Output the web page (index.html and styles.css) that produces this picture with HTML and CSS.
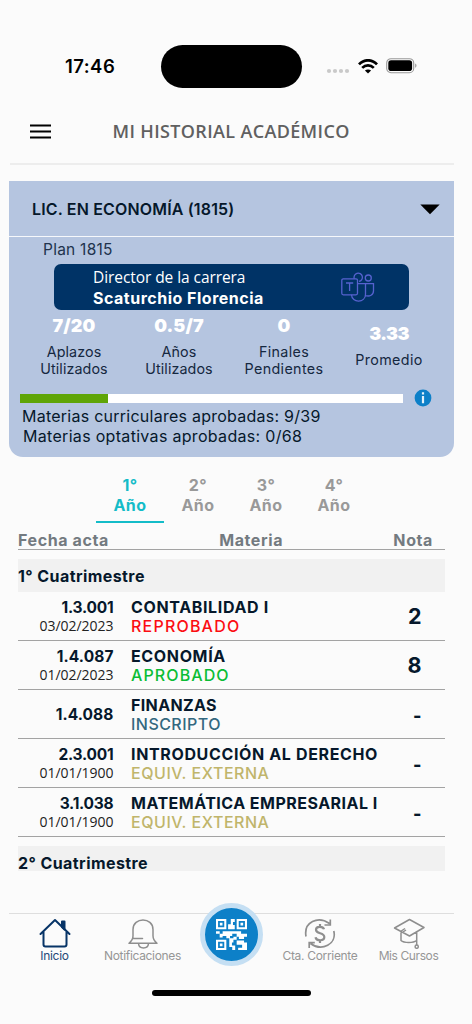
FILE: index.html
```html
<!DOCTYPE html>
<html lang="es">
<head>
<meta charset="utf-8">
<title>Mi historial académico</title>
<link rel="stylesheet" href="styles.css">
</head>
<body>
<div class="phone">
  <div class="status">
    <span class="clock">17:46</span>
    <span class="island"></span>
    <span class="signal">
      <svg class="dots" width="24" height="6" viewBox="0 0 24 6" fill="#c9c9c9"><circle cx="3" cy="3" r="2.1"/><circle cx="9" cy="3" r="2.1"/><circle cx="15" cy="3" r="2.1"/><circle cx="21" cy="3" r="2.1"/></svg>
      <svg class="wifi" width="20" height="15" viewBox="0 0 20 15" fill="none" stroke="#000" stroke-width="2.7"><path d="M1 5.4C6-.1 14-.1 19 5.400"/><path d="M4.200 8.900c3.300-3.300 8.300-3.300 11.600 0"/><path d="M10 14.500 6.900 11.600c1.800-1.500 4.400-1.500 6.200 0z" fill="#000" stroke="none"/></svg>
      <svg class="battery" width="31" height="16" viewBox="0 0 31 16"><rect x=".7" y=".7" width="27" height="14" rx="4.300" fill="none" stroke="#999" stroke-width="1.100"/><rect x="2.300" y="2.300" width="23.800" height="10.800" rx="2.800"/><path d="M29.300 5.500c1.500.7 1.500 3.500 0 4.300z" fill="#888"/></svg>
    </span>
  </div>

  <header class="topbar">
    <svg class="menu" width="21" height="15" viewBox="0 0 21 15" stroke="#000" stroke-width="2.100"><path d="M0 1.500h21M0 7.500h21M0 13.500h21"/></svg>
    <h1>MI HISTORIAL ACADÉMICO</h1>
  </header>

  <section class="card">
    <div class="career"><span>LIC. EN ECONOMÍA (1815)</span><svg width="20" height="11" viewBox="0 0 20 11"><path d="M.3.500h19.400L10 10.300z"/></svg></div>
    <div class="plan">Plan 1815</div>
    <div class="director">
      <div><div class="role">Director de la carrera</div><div class="name">Scaturchio Florencia</div></div>
      <svg width="34" height="31" viewBox="0 0 34 31" fill="none" stroke="#5662cf" stroke-width="1.300"><rect x=".8" y="6.800" width="15.700" height="16" rx="1.500"/><path d="M5 11h7.200M8.600 11v8"/><path d="M13.300 6.800a4.200 4.200 0 1 1 4.700 2.600"/><circle cx="27.300" cy="6" r="3"/><path d="M16.500 11.700h16v7c0 4.500-4 6-7.700 5M24.500 11.700v10.500c0 9-13.700 9-14 .6"/></svg>
    </div>
    <div class="stats">
      <div><b>7/20</b><p>Aplazos<br>Utilizados</p></div>
      <div><b>0.5/7</b><p>Años<br>Utilizados</p></div>
      <div><b>0</b><p class="wide">Finales<br>Pendientes</p></div>
      <div><b class="tight">3.33</b><p class="wide">Promedio</p></div>
    </div>
    <div class="progress">
      <div class="track"><div class="fill"></div></div>
      <svg width="18" height="18" viewBox="0 0 18 18"><circle cx="9" cy="9" r="8.400" fill="#0d80c8"/><path d="M9 3.300v2.200M9 7v7.300" stroke="#e4f3fc" stroke-width="2.200"/></svg>
    </div>
    <p class="totals">Materias curriculares aprobadas: 9/39</p>
    <p class="totals optional">Materias optativas aprobadas: 0/68</p>
  </section>

  <nav class="tabs">
    <a class="active">1°<br>Año</a><a>2°<br>Año</a><a>3°<br>Año</a><a>4°<br>Año</a>
  </nav>

  <section class="table">
    <div class="head"><span>Fecha acta</span><span>Materia</span><span>Nota</span></div>
    <h2>1° Cuatrimestre</h2>
    <div class="row"><div class="when"><b class="snug">1.3.001</b><small>03/02/2023</small></div><div class="what"><b>CONTABILIDAD I</b><span class="failed">REPROBADO</span></div><div class="mark">2</div></div>
    <div class="row"><div class="when"><b>1.4.087</b><small>01/02/2023</small></div><div class="what"><b>ECONOMÍA</b><span class="passed">APROBADO</span></div><div class="mark">8</div></div>
    <div class="row"><div class="when"><b>1.4.088</b></div><div class="what"><b class="fin">FINANZAS</b><span class="enrolled">INSCRIPTO</span></div><div class="mark none">-</div></div>
    <div class="row"><div class="when"><b class="snug">2.3.001</b><small>01/01/1900</small></div><div class="what"><b>INTRODUCCIÓN AL DERECHO</b><span class="external">EQUIV. EXTERNA</span></div><div class="mark none">-</div></div>
    <div class="row"><div class="when"><b class="snug">3.1.038</b><small>01/01/1900</small></div><div class="what"><b class="mat">MATEMÁTICA EMPRESARIAL I</b><span class="external">EQUIV. EXTERNA</span></div><div class="mark none">-</div></div>
    <h2 class="cut">2° Cuatrimestre</h2>
  </section>

  <nav class="bottom">
    <a class="home"><svg width="32" height="31" viewBox="0 0 32 31" fill="none" stroke="#073467" stroke-width="2" stroke-linecap="round" stroke-linejoin="round"><path d="M1.500 16 16 2l14.500 14M4.500 14v12.500q0 2 2 2h19q2 0 2-2V14"/><path d="M23 3.500h2.500v8L23 9z" fill="#073467"/></svg><span>Inicio</span></a>
    <a class="bell"><svg width="32" height="31" viewBox="0 0 32 31" fill="none" stroke="#8e8e8e" stroke-width="1.500" stroke-linejoin="round" stroke-linecap="round"><path d="M2 25.300h28c-2.500-2-4-4-4-7.500V11.500c0-12.700-20-12.700-20 0v6.300c0 3.500-1.500 5.500-4 7.500zM11.500 25.500c.5 6 9.500 6 10 0M6.500 20.500h9"/></svg><span>Notificaciones</span></a>
    <a class="scan"><svg width="31" height="31" viewBox="0 0 21 21" fill="#fff"><path fill-rule="evenodd" d="M0 0h7v7H0zM1.400 1.400v4.200h4.200V1.400zM14 0h7v7h-7zM15.400 1.400v4.200h4.200V1.400zM0 14h7v7H0zM1.400 15.400v4.200h4.200v-4.200z"/><path d="M2.600 2.600h1.800v1.800H2.600zM16.600 2.600h1.800v1.800h-1.800zM2.600 16.600h1.800v1.800H2.600zM10 0h2.700v2H10zM8.200 3.500H10V2h1.500v2h1.200v3h-4.500zM0 8.300h2.500V10H0zM2.500 10H4.500V8.300H14V10h-3v1.500H9.500V13H7v-1.500H4.500v1H2.500zM14 8.300h3V10h4v2h-2v1.500h-3.500V12H14zM9 13h2.800v3H9zM11.800 12H14v2h-2.200zM14 14.500h5V16h2v5h-6v-1.600h2.700v-2H14zM9 16h1.800v2H13v3h-2v-2H9z"/></svg></a>
    <a class="account"><svg width="32" height="31" viewBox="0 0 32 31" fill="none" stroke="#8e8e8e" stroke-width="1.700"><path d="M2 18.500C-.5 4 14-2.500 25.500 5.500M26.300 1.500v5.500h-5.800M29.800 13C33 26 18 34 6.500 25.500M5.200 30v-5.300h5.600"/><path d="M20 11.300c-1-3.300-8-3.300-8 .5 0 4.700 8.300 2.300 8.300 7.200 0 4.300-8 4.300-8.800.2M16 6v3M16 21.500V25" stroke-width="2.200"/></svg><span>Cta. Corriente</span></a>
    <a class="courses"><svg width="32" height="31" viewBox="0 0 32 31" fill="none" stroke="#8e8e8e" stroke-width="1.500" stroke-linejoin="round"><path d="M1.500 10 16.500 1.500 31 9.500 16.500 18zM8 13.700V22.500c3 2.700 12.500 2.700 15.500 0M23.700 13.700v13.500M7.500 13.500l4.500-3M10 14l3-2"/><circle cx="23.700" cy="28.700" r="1.600"/></svg><span>Mis Cursos</span></a>
  </nav>
  <div class="indicator"></div>
</div>
</body>
</html>
```
FILE: styles.css
```css
* { box-sizing: border-box; }
body { margin: 0; background: #fbfbfb; font-family: Inter, "Liberation Sans", sans-serif; color: #06182b; }
h1, h2, p { margin: 0; }
.phone { width: 472px; height: 1024px; overflow: hidden; display: flex; flex-direction: column; }

.status { height: 98px; padding: 45px 55px 0 65px; display: grid; grid-template-columns: 96px 141px 1fr; align-items: center; align-content: start; flex: none; }
.clock { font-size: 18.5px; font-weight: 600; letter-spacing: .45px; color: #000; }
.island { height: 42.500px; border-radius: 22px; background: #000; }
.signal { display: flex; align-items: center; justify-content: flex-end; }
.dots { margin: 9px 8px 0 0; }
.wifi { margin-right: 8px; }

.topbar { height: 67px; margin: 0 18px 0 10px; padding: 1px 0 0 20px; display: flex; align-items: center; flex: none; border-bottom: 2px solid #ededed; }
.menu { margin-right: 61.500px; }
h1 { font: 600 18px/24px "Open Sans", sans-serif; letter-spacing: .35px; color: #606060; }

.card { margin: 16px 18px 0 9px; height: 276px; background: #b5c5e0; border-radius: 0 0 14px 14px; flex: none; }
.career { height: 56px; border-bottom: 1.500px solid #f6f8fb; display: flex; align-items: center; justify-content: space-between; padding: 1px 14px 0 23px; font-size: 16px; font-weight: 600; letter-spacing: .16px; }
.plan { padding: 3px 0 0 34px; font-size: 15.500px; line-height: 20px; letter-spacing: .25px; color: #21334d; height: 27px; }
.director { margin: 0 45px; height: 46px; border-radius: 7px; background: #003366; color: #fff; display: flex; justify-content: space-between; align-items: center; padding: 0 34px 0 39px; }
.role { font: 500 15.500px/21px "Open Sans", sans-serif; letter-spacing: -.07px; margin-top: 1px; }
.name { font-size: 16px; font-weight: 700; line-height: 21px; letter-spacing: .5px; }
.stats { margin: 0 12.500px; height: 84px; display: grid; grid-template-columns: repeat(4, 105px); align-items: center; text-align: center; padding-bottom: 12px; }
.stats b { display: block; font-size: 18px; line-height: 20px; font-weight: 900; letter-spacing: .1px; color: #fff; margin-bottom: 7px; }
.stats b.tight { letter-spacing: -.6px; }
.stats p { font-size: 14.300px; line-height: 17px; letter-spacing: .1px; color: #152840; }
.stats p.wide { letter-spacing: .35px; }
.progress { display: flex; align-items: center; height: 10px; padding-left: 11.400px; gap: 10.500px; margin-top: -1px; }
.track { width: 383px; height: 9px; background: #fff; }
.fill { width: 88px; height: 9px; background: #5fa507; }
.progress svg { flex: none; }
.totals { padding: 0 0 0 13px; font-size: 16px; line-height: 19.500px; letter-spacing: .25px; }
.progress + .totals { margin-top: 4px; }
.totals.optional { letter-spacing: .31px; padding-left: 14px; }

.tabs { height: 66px; padding: 19px 0 0 96px; display: grid; grid-template-columns: repeat(4, 68px); flex: none; }
.tabs a { height: 47px; text-align: center; font-size: 16px; line-height: 19.500px; font-weight: 700; letter-spacing: .5px; color: #999; }
.tabs .active { color: #14bcc8; border-bottom: 2px solid #14bcc8; }

.table { margin: 7px 27px 0 18px; height: 348px; flex: none; }
.head { height: 20px; display: flex; justify-content: space-between; padding-right: 12px; font-size: 16px; font-weight: 700; line-height: 20px; letter-spacing: .6px; color: #737a80; border-bottom: 1.500px solid #a3a3a3; }
h2 { margin-top: 9px; height: 33px; background: #f1f1f1; font-size: 16px; line-height: 35px; letter-spacing: .42px; font-weight: 700; }
h2.cut { height: 25px; }
.row { height: 49.100px; border-bottom: 1.500px solid #a3a3a3; display: grid; grid-template-columns: 95.500px minmax(0, 1fr) 24px; column-gap: 17.500px; align-items: center; padding-right: 23.500px; }
.when { text-align: right; display: flex; flex-direction: column; padding-top: 2px; }
.when b { font-size: 15.500px; line-height: 18px; letter-spacing: .1px; }
.when b.snug { letter-spacing: -.22px; }
.when small { font: 400 14px/18px "Open Sans", sans-serif; letter-spacing: -.03px; color: #222; }
.what { display: flex; flex-direction: column; font-size: 16px; line-height: 19.500px; white-space: nowrap; padding-top: 2px; }
.what b { letter-spacing: .64px; }
.what b.mat { letter-spacing: .48px; }
.what b.fin { letter-spacing: .35px; }
.what span { font-weight: 500; }
.failed { color: #fb0d12; letter-spacing: 1.200px; }
.passed { color: #0bbd35; letter-spacing: 1.100px; }
.enrolled { color: #33687f; letter-spacing: .46px; }
.external { color: #c0b56b; letter-spacing: .53px; }
.mark { font-size: 21.500px; font-weight: 700; text-align: right; }
.mark.none { font-size: 18px; font-weight: 800; padding-top: 2px; }

.bottom { margin: 35px 18px 0 9px; height: 70px; border-top: 1.500px solid #dedede; display: grid; grid-template-columns: 91px 85px 93px 84px 93px; flex: none; }
.bottom a { display: flex; flex-direction: column; align-items: center; padding-top: 3.500px; font-size: 12px; line-height: 15px; color: #969696; white-space: nowrap; }
.bottom a > svg { flex: none; }
.bottom span { letter-spacing: -.32px; margin-top: -1px; }
.bottom .home { color: #244878; }
.bottom .courses span { letter-spacing: -.4px; }
.bottom .scan { width: 63px; height: 63px; margin: -11px auto 0; padding: 0; justify-content: center; border-radius: 50%; background: #0d80c8; border: 5px solid #c5dff3; }
.indicator { width: 159px; height: 6px; border-radius: 3px; background: #000; margin: 7px 0 0 152px; flex: none; }
```
